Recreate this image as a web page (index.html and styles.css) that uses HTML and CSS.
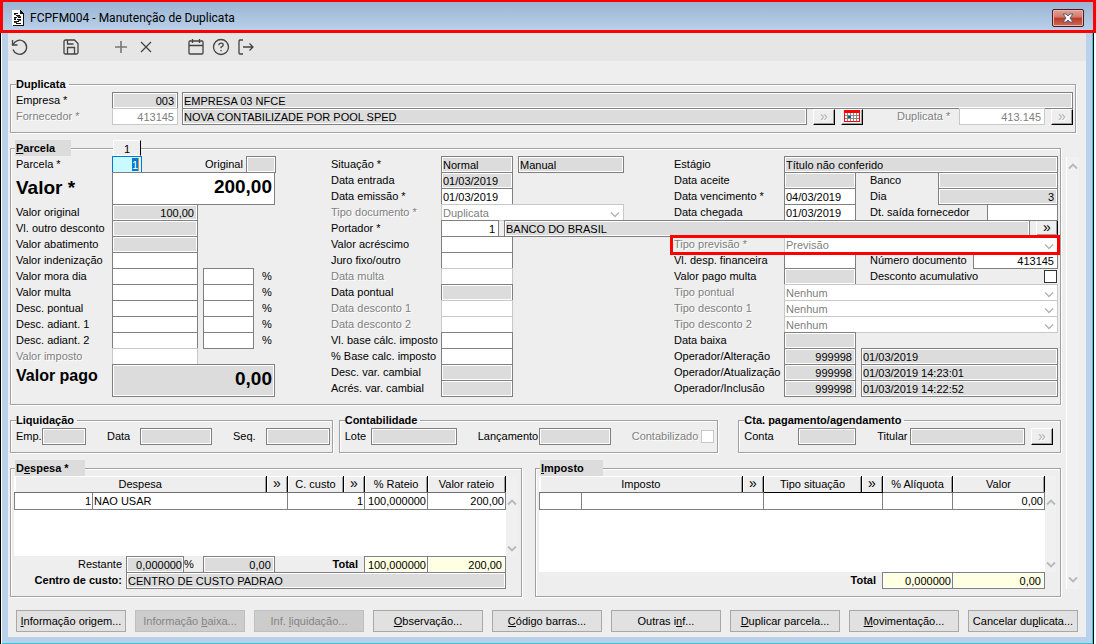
FILE: index.html
```html
<!DOCTYPE html>
<html lang="pt-BR">
<head>
<meta charset="utf-8">
<title>FCPFM004 - Manutenção de Duplicata</title>
<link rel="stylesheet" href="styles.css">
</head>
<body>
<header class="titlebar">
  <svg class="app-icon" viewBox="0 0 12 16" width="12" height="16" shape-rendering="crispEdges"><path d="M0 0h8l4 4v12H0z" fill="#fff"/><path d="M8 0h1v1h1v1h1v1h1v13H1v-1h10V4H8z" fill="#111"/><path d="M2 3h4v1H2zM4 5h4v1H4zM2 7h3v1H2zM6 7h3v1H6zM2 9h2v1H2zM5 9h4v1H5zM2 11h5v1H2zM4 13h5v1H4z" fill="#111"/><path d="M2 4h2v1H2zM5 6h4v1H5zM2 8h2v1H2zM6 10h3v1H6zM2 12h3v1H2z" fill="#444"/></svg>
  <h1>FCPFM004 - Manutenção de Duplicata</h1>
  <button class="close" type="button" aria-label="Fechar"><svg viewBox="0 0 12 10" width="12" height="10"><path d="M1 1h3l2 2 2-2h3L8 5l3 4H8L6 7 4 9H1l3-4z" fill="#fff" stroke="#53617a" stroke-width="1"/></svg></button>
</header>
<div class="frame">
<form class="client">
  <nav class="toolbar">
    <button type="button" class="tool" aria-label="Desfazer"><svg viewBox="0 0 18 18"><path d="M1.500 2v5h5M2 7a7 7 0 1 1 0 4.500"/></svg></button>
    <button type="button" class="tool t-save" aria-label="Salvar"><svg viewBox="0 0 18 18"><path d="M2 3.500Q2 2 3.500 2h9L16 5.500v9Q16 16 14.500 16h-11Q2 16 2 14.500zM5.500 2v4h6M5.500 16V9.500h7V16"/></svg></button>
    <button type="button" class="tool t-add" aria-label="Adicionar"><svg viewBox="0 0 18 18"><path d="M9 3v12M3 9h12" stroke="#777" stroke-width="1.600"/></svg></button>
    <button type="button" class="tool t-del" aria-label="Excluir"><svg viewBox="0 0 18 18"><path d="M4 4l10 10M14 4L4 14"/></svg></button>
    <button type="button" class="tool t-cal" aria-label="Calendário"><svg viewBox="0 0 18 18"><path d="M3 3h12q1 0 1 1v11q0 1-1 1H3q-1 0-1-1V4q0-1 1-1zM2 7.500h14M5.500 1v4M12.500 1v4"/></svg></button>
    <button type="button" class="tool t-help" aria-label="Ajuda"><svg viewBox="0 0 18 18"><circle cx="9" cy="9" r="7.500"/><path d="M6.800 7.200q.2-2 2.200-2 2.200 0 2.200 1.800 0 1.300-2.200 2.200v1M9 12v1.300"/></svg></button>
    <button type="button" class="tool t-exit" aria-label="Sair"><svg viewBox="0 0 18 18"><path d="M6 2H3q-1 0-1 1v12q0 1 1 1h3M6 9h10M12.500 5.500L16 9l-3.500 3.500"/></svg></button>
  </nav>

  <fieldset class="group duplicata">
    <legend>Duplicata</legend>
    <div class="row"><label class="l96" for="emp">Empresa *</label><input id="emp" class="f w66 num" readonly value="003"><input class="f grow g4" aria-label="Nome da empresa" readonly value="EMPRESA 03 NFCE"></div>
    <div class="row"><label class="l96 off" for="forn">Fornecedor *</label><input id="forn" class="f w66 num" disabled value="413145"><input class="f grow g4" aria-label="Nome do fornecedor" readonly value="NOVA CONTABILIZADE POR POOL SPED"><button type="button" class="look off g6" aria-label="Buscar fornecedor">»</button><button type="button" class="look g6" aria-label="Agenda"><svg viewBox="0 0 16 12" width="16" height="12" shape-rendering="crispEdges"><path d="M0 0h16v12H0z" fill="red"/><path d="M1 3h14v8H1z" fill="#fff"/><path d="M3 3v8M6 3v8M9 3v8M12 3v8M1 5h14M1 8h14" stroke="#888"/><path d="M4 6h3v2H4z" fill="#069"/></svg></button><label class="off l62" for="dup">Duplicata *</label><input id="dup" class="f w86 num" disabled value="413.145"><button type="button" class="look off g6" aria-label="Buscar duplicata">»</button></div>
  </fieldset>

  <div class="content">
  <main class="panels">
    <fieldset class="group parcela">
      <legend class="hot"><u>P</u>arcela</legend>
      <button type="button" class="tab">1</button>
      <div class="columns">
        <div class="row c1"><label class="l96" for="parc">Parcela *</label><input id="parc" class="f w30 num current" value="1"><label class="orig" for="orig">Original</label><input id="orig" class="f w30" readonly></div>
        <div class="row c1 tall"><label class="l96 big" for="valor">Valor *</label><input id="valor" class="f w163 num total" value="200,00"></div>
        <div class="row c1"><label class="l96" for="vo">Valor original</label><input id="vo" class="f w86 num" readonly value="100,00"></div>
        <div class="row c1"><label class="l96" for="vd">Vl. outro desconto</label><input id="vd" class="f w86" readonly></div>
        <div class="row c1"><label class="l96" for="va">Valor abatimento</label><input id="va" class="f w86" readonly></div>
        <div class="row c1"><label class="l96" for="vi">Valor indenização</label><input id="vi" class="f w86"></div>
        <div class="row c1"><label class="l96" for="vm">Valor mora dia</label><input id="vm" class="f w86"><input class="f w51 g5" id="vmp"><label class="pct" for="vmp">%</label></div>
        <div class="row c1"><label class="l96" for="mu">Valor multa</label><input id="mu" class="f w86"><input class="f w51 g5" id="mup"><label class="pct" for="mup">%</label></div>
        <div class="row c1"><label class="l96" for="dp">Desc. pontual</label><input id="dp" class="f w86"><input class="f w51 g5" id="dpp"><label class="pct" for="dpp">%</label></div>
        <div class="row c1"><label class="l96" for="da">Desc. adiant. 1</label><input id="da" class="f w86"><input class="f w51 g5" id="dap"><label class="pct" for="dap">%</label></div>
        <div class="row c1"><label class="l96" for="db">Desc. adiant. 2</label><input id="db" class="f w86"><input class="f w51 g5" id="dbp"><label class="pct" for="dbp">%</label></div>
        <div class="row c1"><label class="l96 off" for="im">Valor imposto</label><input id="im" class="f w86" disabled></div>
        <div class="row c1 tall"><label class="l96 mid" for="pago">Valor pago</label><input id="pago" class="f w163 num total" readonly value="0,00"></div>

        <div class="row c2"><label class="l110" for="sit">Situação *</label><input id="sit" class="f w72" readonly value="Normal"><input class="f w105 g5" aria-label="Modo" readonly value="Manual"></div>
        <div class="row c2"><label class="l110" for="ent">Data entrada</label><input id="ent" class="f w72" readonly value="01/03/2019"></div>
        <div class="row c2"><label class="l110" for="emi">Data emissão *</label><input id="emi" class="f w72" value="01/03/2019"></div>
        <div class="row c2"><label class="l110 off" for="tdoc">Tipo documento *</label><select id="tdoc" class="f w183" disabled><option>Duplicata</option></select></div>
        <div class="row wide"><label class="l110" for="port">Portador *</label><input id="port" class="f w58 num" value="1"><input class="f grow g5" aria-label="Nome do portador" readonly value="BANCO DO BRASIL"><button type="button" class="look flat g6" aria-label="Buscar portador">»</button></div>
        <div class="row c2"><label class="l110" for="acr">Valor acréscimo</label><input id="acr" class="f w72"></div>
        <div class="row c2"><label class="l110" for="jur">Juro fixo/outro</label><input id="jur" class="f w72"></div>
        <div class="row c2"><label class="l110 off" for="dmu">Data multa</label><input id="dmu" class="f w72" disabled></div>
        <div class="row c2"><label class="l110" for="dpo">Data pontual</label><input id="dpo" class="f w72" readonly></div>
        <div class="row c2"><label class="l110 off" for="dd1">Data desconto 1</label><input id="dd1" class="f w72" disabled></div>
        <div class="row c2"><label class="l110 off" for="dd2">Data desconto 2</label><input id="dd2" class="f w72" disabled></div>
        <div class="row c2"><label class="l110" for="vbc">Vl. base cálc. imposto</label><input id="vbc" class="f w72"></div>
        <div class="row c2"><label class="l110" for="pbc">% Base calc. imposto</label><input id="pbc" class="f w72"></div>
        <div class="row c2"><label class="l110" for="dvc">Desc. var. cambial</label><input id="dvc" class="f w72" readonly></div>
        <div class="row c2"><label class="l110" for="avc">Acrés. var. cambial</label><input id="avc" class="f w72" readonly></div>

        <div class="row c3"><label class="l110" for="est">Estágio</label><input id="est" class="f grow" readonly value="Título não conferido"></div>
        <div class="row c3"><label class="l110" for="ace">Data aceite</label><input id="ace" class="f w72" readonly><label class="second l68" for="ban">Banco</label><input id="ban" class="f grow" readonly></div>
        <div class="row c3"><label class="l110" for="ven">Data vencimento *</label><input id="ven" class="f w72" value="04/03/2019"><label class="second l68" for="dia">Dia</label><input id="dia" class="f grow num" readonly value="3"></div>
        <div class="row c3"><label class="l110" for="che">Data chegada</label><input id="che" class="f w72" value="01/03/2019"><label class="second l117" for="sai">Dt. saída fornecedor</label><input id="sai" class="f grow"></div>
        <div class="row c3 highlight"><label class="l110 off" for="tp">Tipo previsão *</label><select id="tp" class="f grow" disabled><option>Previsão</option></select></div>
        <div class="row c3"><label class="l110" for="vdf">Vl. desp. financeira</label><input id="vdf" class="f w72"><label class="second l103" for="ndoc">Número documento</label><input id="ndoc" class="f grow num" value="413145"></div>
        <div class="row c3"><label class="l110" for="vpm">Valor pago multa</label><input id="vpm" class="f w72" readonly><label class="second" for="acu">Desconto acumulativo</label><input id="acu" class="check push" type="checkbox"></div>
        <div class="row c3"><label class="l110 off" for="tpo">Tipo pontual</label><select id="tpo" class="f grow" disabled><option>Nenhum</option></select></div>
        <div class="row c3"><label class="l110 off" for="td1">Tipo desconto 1</label><select id="td1" class="f grow" disabled><option>Nenhum</option></select></div>
        <div class="row c3"><label class="l110 off" for="td2">Tipo desconto 2</label><select id="td2" class="f grow" disabled><option>Nenhum</option></select></div>
        <div class="row c3"><label class="l110" for="bai">Data baixa</label><input id="bai" class="f w72" readonly></div>
        <div class="row c3"><label class="l110" for="oal">Operador/Alteração</label><input id="oal" class="f w72 num" readonly value="999998"><input class="f grow g5" aria-label="Data da alteração" readonly value="01/03/2019"></div>
        <div class="row c3"><label class="l110" for="oat">Operador/Atualização</label><input id="oat" class="f w72 num" readonly value="999998"><input class="f grow g5" aria-label="Data da atualização" readonly value="01/03/2019 14:23:01"></div>
        <div class="row c3"><label class="l110" for="oin">Operador/Inclusão</label><input id="oin" class="f w72 num" readonly value="999998"><input class="f grow g5" aria-label="Data da inclusão" readonly value="01/03/2019 14:22:52"></div>
      </div>
    </fieldset>

    <div class="trio">
      <fieldset class="group"><legend>Liquidação</legend>
        <div class="row"><label class="l26" for="lemp">Emp.</label><input id="lemp" class="f w44" readonly><label class="l33 g21" for="ldat">Data</label><input id="ldat" class="f w72" readonly><label class="l33 g21" for="lseq">Seq.</label><input id="lseq" class="f grow" readonly></div>
      </fieldset>
      <fieldset class="group"><legend>Contabilidade</legend>
        <div class="row"><label class="l26" for="lote">Lote</label><input id="lote" class="f w86" readonly><label class="l61 g21" for="lanc">Lançamento</label><input id="lanc" class="f w72" readonly><label class="off g21" for="ctb">Contabilizado</label><input id="ctb" class="check push" type="checkbox" disabled></div>
      </fieldset>
      <fieldset class="group cta"><legend>Cta. pagamento/agendamento</legend>
        <div class="row"><label class="l54" for="cta">Conta</label><input id="cta" class="f w58" readonly><label class="l33 g21" for="tit">Titular</label><input id="tit" class="f grow" readonly><button type="button" class="look off g6 titular" aria-label="Buscar titular">»</button></div>
      </fieldset>
    </div>

    <div class="duo">
      <fieldset class="group rateio"><legend class="hot w70">D<u>e</u>spesa *</legend>
        <div class="sheet">
          <div class="sheet-main">
            <div class="canvas">
            <table>
              <colgroup><col class="k78"><col><col class="k21"><col class="k56"><col class="k21"><col class="k63"><col class="k78"></colgroup>
              <thead><tr><th colspan="2">Despesa</th><th><button type="button">»</button></th><th>C. custo</th><th><button type="button">»</button></th><th>% Rateio</th><th>Valor rateio</th></tr></thead>
              <tbody><tr><td class="num">1</td><td colspan="2">NAO USAR</td><td colspan="2" class="num">1</td><td class="num">100,000000</td><td class="num">200,00</td></tr></tbody>
            </table>
            </div>
            <div class="row"><label class="l112 end" for="res">Restante</label><input id="res" class="f w58 num tight" readonly value="0,000000"><label for="resv">%</label><input id="resv" class="f w72 num resv" readonly value="0,00"><strong class="sum">Total</strong><input class="f w64 num tight yellow" aria-label="Total % rateio" readonly value="100,000000"><input class="f w78 num yellow join" aria-label="Total valor rateio" readonly value="200,00"></div>
            <div class="row"><label class="l112 end strong" for="cc">Centro de custo:</label><input id="cc" class="f grow" readonly value="CENTRO DE CUSTO PADRAO"></div>
          </div>
          <div class="mini-scroll"><svg viewBox="0 0 10 7"><path d="M1 5.500L5 1.500l4 4"/></svg><svg viewBox="0 0 10 7"><path d="M1 1.500l4 4 4-4"/></svg></div>
        </div>
      </fieldset>
      <fieldset class="group imposto"><legend class="hot w63"><u>I</u>mposto</legend>
        <div class="sheet">
          <div class="sheet-main">
            <div class="canvas">
            <table>
              <colgroup><col class="k42"><col><col class="k21"><col class="k98"><col class="k21"><col class="k70"><col class="k92"></colgroup>
              <thead><tr><th colspan="2">Imposto</th><th><button type="button">»</button></th><th class="sorted">Tipo situação</th><th class="sorted"><button type="button">»</button></th><th>% Alíquota</th><th>Valor</th></tr></thead>
              <tbody><tr><td></td><td colspan="2"></td><td colspan="2"></td><td></td><td class="num">0,00</td></tr></tbody>
            </table>
            </div>
            <div class="row"><strong class="sum">Total</strong><input class="f w71 num tight yellow" aria-label="Total % alíquota" readonly value="0,000000"><input class="f w92 num yellow join" aria-label="Total valor" readonly value="0,00"></div>
          </div>
          <div class="mini-scroll"><svg viewBox="0 0 10 7"><path d="M1 5.500L5 1.500l4 4"/></svg><svg viewBox="0 0 10 7"><path d="M1 1.500l4 4 4-4"/></svg></div>
        </div>
      </fieldset>
    </div>
  </main>
  <div class="scroll"><svg viewBox="0 0 10 7"><path d="M1 5.500L5 1.500l4 4"/></svg><svg viewBox="0 0 10 7"><path d="M1 1.500l4 4 4-4"/></svg></div>
  </div>

  <footer class="actions">
    <button type="button"><u>I</u>nformação origem...</button>
    <button type="button" disabled>Informação <u>b</u>aixa...</button>
    <button type="button" disabled>Inf. <u>l</u>iquidação...</button>
    <button type="button"><u>O</u>bservação...</button>
    <button type="button"><u>C</u>ódigo barras...</button>
    <button type="button">Outras i<u>n</u>f...</button>
    <button type="button"><u>D</u>uplicar parcela...</button>
    <button type="button"><u>M</u>ovimentação...</button>
    <button type="button">Cancelar du<u>p</u>licata...</button>
  </footer>
</form>
</div>
</body>
</html>
```
FILE: styles.css
```css
* { box-sizing: border-box; }

body {
  margin: 0;
  min-height: 100vh;
  display: flex;
  flex-direction: column;
  background: #fff;
  color: #000;
  font: 11px/16px "Liberation Sans", Arial, sans-serif;
}

button, input, select { font: inherit; color: inherit; margin: 0; }

/* window chrome */
.titlebar {
  display: flex;
  align-items: center;
  height: 33px;
  padding: 0 9px;
  border: 3px solid #f00;
  border-top-width: 2px;
  background: linear-gradient(#9ab4d2, #b8d0e9);
}
.titlebar h1 {
  flex: 1;
  margin: 4px 0 0 6px;
  font: 12px/16px Roboto, "Open Sans", sans-serif;
}
.app-icon { margin-top: 4px; }
.close {
  display: flex;
  align-items: center;
  justify-content: center;
  width: 32px;
  height: 18px;
  margin-top: 4px;
  padding: 0;
  border: 1px solid #4c1a20;
  border-radius: 2px;
  background: linear-gradient(#e3a094, #d2796b 45%, #b83a25 50%, #cf6a55);
  box-shadow: inset 0 0 0 1px #e9b5ac;
}
.close svg { flex: none; }
.frame {
  flex: 1;
  display: flex;
  margin-right: 2px;
  padding: 0 7px 7px 7px;
  border-left: 1px solid #000;
  border-right: 1px solid #000;
  background: #b9d1ea;
  box-shadow: inset 1px 0 #fff, inset -1px -1px #2fc8e0;
}
.client {
  flex: 1;
  min-width: 0;
  display: flex;
  flex-direction: column;
  background: #eee;
}

.toolbar {
  display: flex;
  align-items: center;
  height: 28px;
  padding-left: 3px;
  background: #e6e6e6;
}
.tool { width: 18px; height: 18px; padding: 0; border: 0; background: none; }
.tool svg { display: block; fill: none; stroke: #444; stroke-width: 1.300; }
.t-save { margin-left: 33px; }
.t-add { margin-left: 32px; }
.t-del { margin-left: 7px; }
.t-cal { margin-left: 32px; }
.t-help { margin-left: 7px; }
.t-exit { margin-left: 7px; }

/* groups */
.group {
  position: relative;
  min-width: 0;
  margin: 0;
  padding: 0 2px 8px 5px;
  border: 1px solid #a0a0a0;
  box-shadow: 1px 1px #fff, inset 1px 1px #fff;
}
.group legend {
  height: 16px;
  padding: 0 3px 0 0;
  font-weight: bold;
}
.group legend.hot { width: 56px; margin-left: -1px; padding-left: 1px; background: #dcdcdc; }
.group legend.w70 { width: 70px; }
.group legend.w63 { width: 63px; }
.duplicata { margin: 15px 10px 7px 2px; }
.tab {
  position: absolute;
  top: -16px;
  left: 102px;
  width: 28px;
  height: 16px;
  padding: 0;
  border: 1px solid #fff;
  border-right-color: #000;
  background: #eee;
}

.row { display: flex; align-items: flex-start; height: 16px; }
.row.tall { height: 32px; grid-row: span 2; }
.row label { flex: none; white-space: nowrap; }
.row .off { color: #808080; text-shadow: 1px 1px #fff; }
.big, .mid { font-weight: bold; }
.row .big { font-size: 19px; line-height: 32px; }
.row .mid { font-size: 16px; line-height: 24px; }
.strong { font-weight: bold; }
.end { text-align: right; padding-right: 4px; }

.f {
  flex: none;
  min-width: 0;
  height: 17px;
  padding: 1px 3px 0 1px;
  border: 1px solid #808080;
  border-radius: 0;
  background: #fff;
  outline: 0;
}
.f[readonly] { background: #dcdcdc; box-shadow: inset 0 0 0 1px #fff; }
.f:disabled {
  border-color: #c8c8c8;
  color: #808080;
  opacity: 1;
}
select.f:disabled {
  appearance: none;
  padding-top: 0;
  background: #fff url("data:image/svg+xml,%3Csvg xmlns='http://www.w3.org/2000/svg' width='10' height='7' fill='none' stroke='%23b4b4b4' stroke-width='1.500'%3E%3Cpath d='M1 1.500l4 4 4-4'/%3E%3C/svg%3E") no-repeat right 3px bottom 2px;
}
.f.yellow { background: #ffffe1; }
.f.join { margin-left: -1px; }
.f.tight { padding-left: 0; padding-right: 1px; }
.f.total { height: 33px; padding: 0 2px 4px; font-size: 19px; font-weight: bold; }
.num { text-align: right; }
.f.current {
  border-color: #0078d7;
  color: #fff;
  background: linear-gradient(#f58a1f, #f58a1f) right 2px center / 1px 13px no-repeat, linear-gradient(#0078d7, #0078d7) right 3px center / 6px 13px no-repeat, #c8faff;
}
.row .grow { flex: 1 1 0; width: 0; }

.w30 { width: 30px; }
.w44 { width: 44px; }
.w51 { width: 51px; }
.w58 { width: 58px; }
.w64 { width: 64px; }
.w66 { width: 66px; }
.w71 { width: 71px; }
.w72 { width: 72px; }
.w78 { width: 79px; }
.w86 { width: 86px; }
.w92 { width: 93px; }
.w105 { width: 106px; }
.w163 { width: 163px; }
.w183 { width: 183px; }
.l26 { width: 26px; }
.l33 { width: 33px; }
.l54 { width: 54px; }
.l61 { width: 61px; }
.l62 { width: 62px; margin-left: 34px; }
.l68 { width: 68px; }
.l96 { width: 96px; }
.l103 { width: 103px; }
.l110 { width: 110px; }
.l112 { width: 112px; }
.l117 { width: 117px; }
.g4 { margin-left: 4px; }
.g5 { margin-left: 5px; }
.row .g6 { margin-left: 6px; }
.g21 { margin-left: 21px; }
.pct { margin-left: 8px; }
.orig { width: 41px; margin-left: 63px; }
.second { margin-left: 14px; }
.push { margin-left: auto; }

.look {
  flex: none;
  display: flex;
  align-items: center;
  justify-content: center;
  width: 22px;
  height: 16px;
  padding: 0 0 2px;
  border: 1px solid #fff;
  border-right-color: #000;
  border-bottom-color: #000;
  background: #eee;
  box-shadow: inset -1px -1px #a0a0a0;
  font-size: 14px;
  line-height: 12px;
}
.look svg { flex: none; }
.duplicata .look { margin-top: 1px; }
.look.off { color: #b0b0b0; }
.look.flat { border-bottom-color: #eee; }
.look.titular { height: 17px; margin-right: 5px; }
.check {
  flex: none;
  appearance: none;
  width: 13px;
  height: 13px;
  margin-top: 2px;
  margin-right: 1px;
  border: 1px solid #333;
  background: #fff;
}
.check:disabled { border-color: #c8c8c8; }

.content { display: flex; gap: 5px; padding: 0 7px 0 2px; }
.panels { flex: 1; min-width: 0; display: grid; gap: 7px; }
.columns {
  display: grid;
  grid-template-columns: 315fr 343fr 384fr;
  grid-template-rows: repeat(15, 16px);
  grid-auto-flow: row dense;
}
.c1 { grid-column: 1; }
.c2 { grid-column: 2; }
.c3 { grid-column: 3; }
.wide { grid-column: 2 / 4; }
.highlight { position: relative; z-index: 1; }
.highlight::after {
  content: "";
  position: absolute;
  inset: -1px -2px -3px -4px;
  border: 3px solid #f00;
  pointer-events: none;
}

.trio { display: grid; grid-template-columns: 323fr 380fr 337fr; gap: 6px; }
.cta { margin-left: 14px; }

/* tables */
.duo { display: grid; grid-template-columns: 512fr 526fr; gap: 13px; }
.duo .group { padding: 0 4px 8px 3px; }
.duo .group legend { margin-left: 1px; }
.sheet { display: flex; }
.sheet-main { flex: 1; min-width: 0; }
.canvas { height: 80px; background: #fff; }
.imposto .canvas { height: 96px; }
table { width: 100%; table-layout: fixed; border-collapse: collapse; }
.k21 { width: 21px; }
.k42 { width: 42px; }
.k56 { width: 56px; }
.k63 { width: 63px; }
.k70 { width: 70px; }
.k78 { width: 78px; }
.k92 { width: 92px; }
.k98 { width: 98px; }
th {
  height: 16px;
  padding: 1px 0 0;
  border-right: 1px solid #000;
  border-bottom: 1px solid #707070;
  background: #eee;
  box-shadow: inset 0 1px #fff, inset 1px 0 #fff, inset -1px 0 #a0a0a0;
  font-weight: normal;
  line-height: 15px;
}
th.sorted { border-bottom-color: #000; }
th button { display: block; width: 100%; height: 15px; padding: 0 0 3px; border: 0; background: none; font-size: 14px; line-height: 12px; }
td { height: 17px; padding: 0 1px; border: 1px solid #808080; line-height: 16px; white-space: nowrap; }
.sum { margin-left: auto; padding-right: 6px; }
.resv { margin-left: 9px; }
.mini-scroll { width: 11px; height: 80px; display: flex; flex-direction: column; justify-content: space-between; align-items: center; padding: 23px 0 4px 1px; background: #f0f0f0; }
.imposto .mini-scroll { height: 96px; }
.mini-scroll svg, .scroll svg { width: 10px; height: 7px; fill: none; stroke: #b8b8b8; stroke-width: 1.800; }
.scroll {
  width: 13px;
  display: flex;
  flex-direction: column;
  align-items: flex-start;
  justify-content: space-between;
  margin: 17px 0 8px;
  padding: 6px 0 6px 1px;
  border-left: 1px solid #fff;
  background: #f1f1f1;
}

.actions { display: flex; gap: 9px; padding: 13px 8px 5px; }
.actions button {
  flex: 1 1 0;
  height: 22px;
  padding: 0;
  border: 1px solid #a8a8a8;
  background: #e1e1e1;
  white-space: nowrap;
}
.actions button:disabled { border-color: #bfbfbf; background: #ccc; color: #858585; }
```
